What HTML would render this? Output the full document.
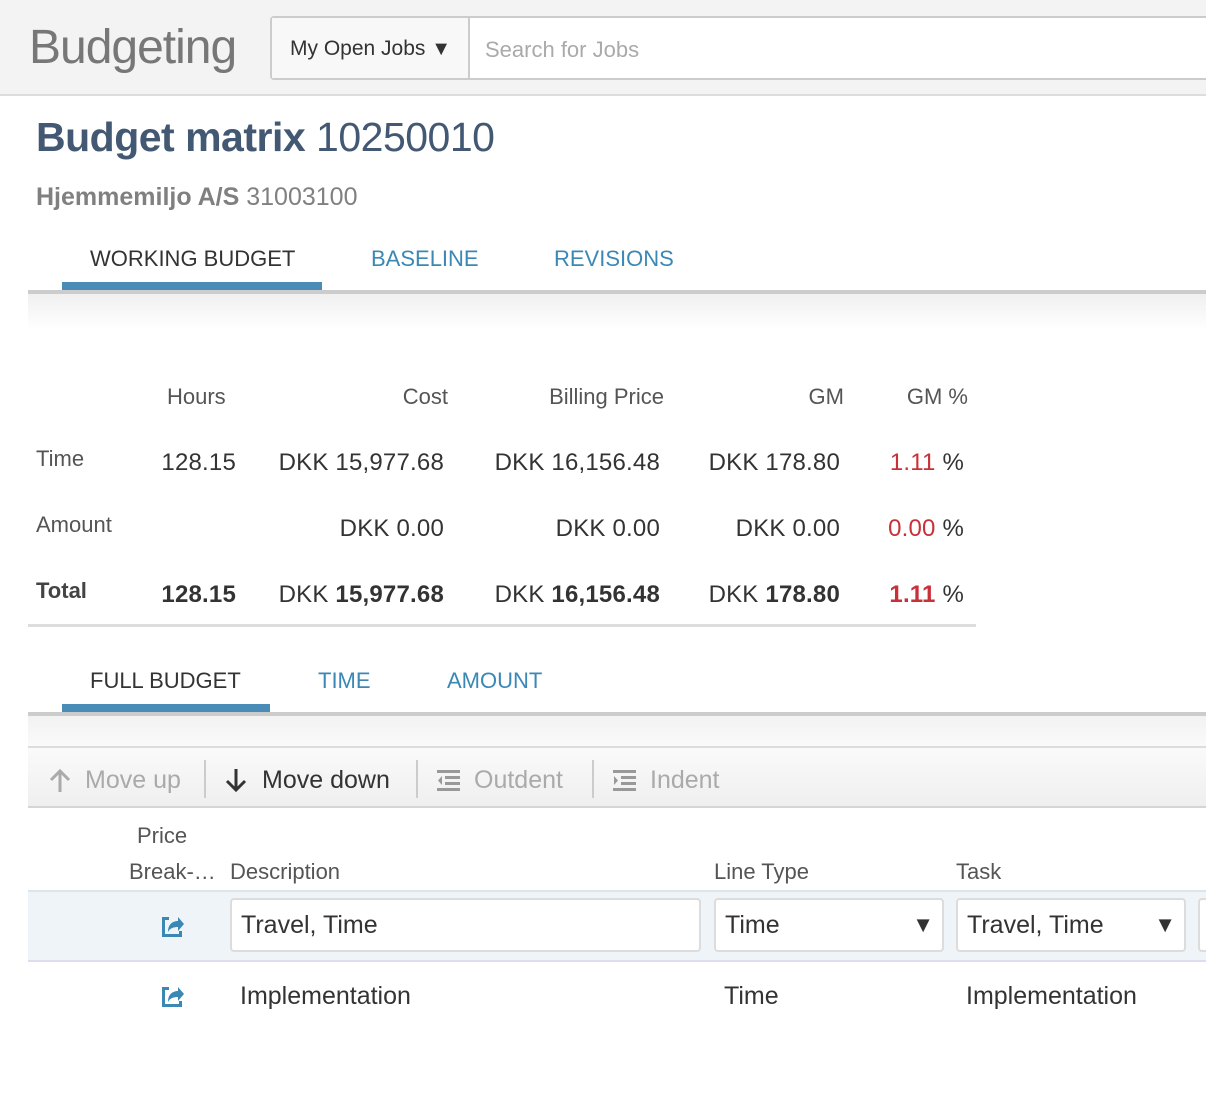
<!DOCTYPE html>
<html><head><style>
*{margin:0;padding:0;box-sizing:border-box}
body{width:1206px;height:1100px;background:#fff;font-family:"Liberation Sans",sans-serif;position:relative;overflow:hidden;color:#333}
.a{position:absolute;white-space:nowrap}
.r{text-align:right}
.hdr{position:absolute;left:0;top:0;width:1206px;height:96px;background:#f3f3f3;border-bottom:2px solid #ddd}
.tab{font-size:22px;color:#3b88b5}
.num{font-size:24px;color:#333;letter-spacing:0.2px}
.red{color:#c8303a}
.lbl{font-size:21px;color:#555}
.box{position:absolute;border:2px solid #dcdcdc;border-radius:4px;background:#fff;font-size:25px;padding-left:9px;line-height:50px;height:54px;top:898px}
.tri{position:absolute;right:8px;top:0;font-size:22px;color:#333}
</style></head><body>
<div class="hdr"></div>
<div class="a" style="left:29px;top:20px;font-size:48px;color:#777;letter-spacing:-1px">Budgeting</div>
<div class="a" style="left:270px;top:16px;width:960px;height:64px;border:2px solid #ccc;border-radius:4px;background:#fff"></div>
<div class="a" style="left:272px;top:18px;width:198px;height:60px;background:#f8f8f8;border-right:2px solid #ccc"></div>
<div class="a" style="left:290px;top:37px;font-size:21px;color:#333">My Open Jobs <span style="font-size:20px">▼</span></div>
<div class="a" style="left:485px;top:37px;font-size:22px;color:#aaa">Search for Jobs</div>

<div class="a" style="left:36px;top:114px;font-size:41px;font-weight:bold;color:#435873;letter-spacing:-0.5px">Budget matrix <span style="font-weight:normal">10250010</span></div>
<div class="a" style="left:36px;top:183px;font-size:25px;color:#808080"><b>Hjemmemiljo A/S</b> 31003100</div>

<div class="a tab" style="left:90px;top:246px;color:#333">WORKING BUDGET</div>
<div class="a tab" style="left:371px;top:246px">BASELINE</div>
<div class="a tab" style="left:554px;top:246px">REVISIONS</div>
<div class="a" style="left:62px;top:282px;width:260px;height:8px;background:#4a8cb8"></div>
<div class="a" style="left:28px;top:290px;width:1178px;height:4px;background:#ccc"></div>
<div class="a" style="left:28px;top:294px;width:1178px;height:36px;background:linear-gradient(#f0f0f0,#fff)"></div>

<div class="a lbl" style="left:167px;top:384px;font-size:22px">Hours</div>
<div class="a lbl r" style="left:340px;top:384px;width:108px;font-size:22px">Cost</div>
<div class="a lbl r" style="left:500px;top:384px;width:164px;font-size:22px">Billing Price</div>
<div class="a lbl r" style="left:760px;top:384px;width:84px;font-size:22px">GM</div>
<div class="a lbl r" style="left:880px;top:384px;width:88px;font-size:22px">GM %</div>

<div class="a lbl" style="left:36px;top:446px;font-size:22px">Time</div>
<div class="a num r" style="left:130px;top:449px;width:106px">128.15</div>
<div class="a num r" style="left:250px;top:449px;width:194px">DKK 15,977.68</div>
<div class="a num r" style="left:460px;top:449px;width:200px">DKK 16,156.48</div>
<div class="a num r" style="left:680px;top:449px;width:160px">DKK 178.80</div>
<div class="a num r" style="left:860px;top:449px;width:104px"><span class="red">1.11</span> %</div>

<div class="a lbl" style="left:36px;top:512px;font-size:22px">Amount</div>
<div class="a num r" style="left:260px;top:515px;width:184px">DKK 0.00</div>
<div class="a num r" style="left:470px;top:515px;width:190px">DKK 0.00</div>
<div class="a num r" style="left:680px;top:515px;width:160px">DKK 0.00</div>
<div class="a num r" style="left:860px;top:515px;width:104px"><span class="red">0.00</span> %</div>

<div class="a lbl" style="left:36px;top:578px;font-weight:bold;color:#444;font-size:22px">Total</div>
<div class="a num r" style="left:130px;top:581px;width:106px;font-weight:bold">128.15</div>
<div class="a num r" style="left:240px;top:581px;width:204px">DKK <b>15,977.68</b></div>
<div class="a num r" style="left:450px;top:581px;width:210px">DKK <b>16,156.48</b></div>
<div class="a num r" style="left:680px;top:581px;width:160px">DKK <b>178.80</b></div>
<div class="a num r" style="left:860px;top:581px;width:104px"><b class="red">1.11</b> %</div>
<div class="a" style="left:28px;top:624px;width:948px;height:3px;background:#ddd"></div>

<div class="a tab" style="left:90px;top:668px;color:#333">FULL BUDGET</div>
<div class="a tab" style="left:318px;top:668px">TIME</div>
<div class="a tab" style="left:447px;top:668px">AMOUNT</div>
<div class="a" style="left:62px;top:704px;width:208px;height:8px;background:#4a8cb8"></div>
<div class="a" style="left:28px;top:712px;width:1178px;height:4px;background:#ccc"></div>
<div class="a" style="left:28px;top:716px;width:1178px;height:30px;background:linear-gradient(#f2f2f2,#fafafa)"></div>
<div class="a" style="left:28px;top:746px;width:1178px;height:2px;background:#ddd"></div>
<div class="a" style="left:28px;top:748px;width:1178px;height:58px;background:linear-gradient(#fafafa,#efefef)"></div>
<div class="a" style="left:28px;top:806px;width:1178px;height:2px;background:#d5d5d5"></div>

<svg class="a" style="left:48px;top:768px" width="24" height="26"><path d="M12 24V3M3 12l9-9 9 9" stroke="#aaa" stroke-width="3" fill="none"/></svg>
<div class="a" style="left:85px;top:766px;font-size:25px;color:#aaa">Move up</div>
<div class="a" style="left:204px;top:760px;width:2px;height:38px;background:#ccc"></div>
<svg class="a" style="left:224px;top:767px" width="24" height="26"><path d="M12 2v21M3 14l9 9 9-9" stroke="#333" stroke-width="3" fill="none"/></svg>
<div class="a" style="left:262px;top:766px;font-size:25px;color:#333">Move down</div>
<div class="a" style="left:416px;top:760px;width:2px;height:38px;background:#ccc"></div>
<svg class="a" style="left:437px;top:769px" width="24" height="24"><g fill="#999"><rect x="0" y="1" width="23" height="3"/><rect x="8" y="7" width="15" height="3"/><rect x="8" y="13" width="15" height="3"/><rect x="0" y="19" width="23" height="3"/><path d="M5 7 L1 11.5 L5 16Z"/></g></svg>
<div class="a" style="left:474px;top:766px;font-size:25px;color:#aaa">Outdent</div>
<div class="a" style="left:592px;top:760px;width:2px;height:38px;background:#ccc"></div>
<svg class="a" style="left:613px;top:769px" width="24" height="24"><g fill="#999"><rect x="0" y="1" width="23" height="3"/><rect x="8" y="7" width="15" height="3"/><rect x="8" y="13" width="15" height="3"/><rect x="0" y="19" width="23" height="3"/><path d="M1 7 L5 11.5 L1 16Z"/></g></svg>
<div class="a" style="left:650px;top:766px;font-size:25px;color:#aaa">Indent</div>

<div class="a lbl" style="left:137px;top:823px;font-size:22px">Price</div>
<div class="a lbl" style="left:129px;top:859px;font-size:22px">Break-…</div>
<div class="a lbl" style="left:230px;top:859px;font-size:22px">Description</div>
<div class="a lbl" style="left:714px;top:859px;font-size:22px">Line Type</div>
<div class="a lbl" style="left:956px;top:859px;font-size:22px">Task</div>

<div class="a" style="left:28px;top:890px;width:1178px;height:2px;background:#dde5ea"></div>
<div class="a" style="left:28px;top:892px;width:1178px;height:68px;background:#eef4f8"></div>
<div class="a" style="left:28px;top:960px;width:1178px;height:2px;background:#dde"></div>
<svg class="a" style="left:159px;top:912px" width="28" height="28"><path d="M4 5h6v3H6v14h14v-3h3v6H3V5z" fill="#3b88b5"/><path d="M9 20c0-8 5-11 10-11V5l6 7-6 7v-4c-4 0-8 1-10 5z" fill="#3b88b5"/></svg>
<div class="box" style="left:230px;width:471px">Travel, Time</div>
<div class="box" style="left:714px;width:230px">Time<span class="tri">▼</span></div>
<div class="box" style="left:956px;width:230px">Travel, Time<span class="tri">▼</span></div>
<div class="box" style="left:1198px;width:40px"></div>

<svg class="a" style="left:159px;top:982px" width="28" height="28"><path d="M4 5h6v3H6v14h14v-3h3v6H3V5z" fill="#3b88b5"/><path d="M9 20c0-8 5-11 10-11V5l6 7-6 7v-4c-4 0-8 1-10 5z" fill="#3b88b5"/></svg>
<div class="a" style="left:240px;top:982px;font-size:25px;color:#333">Implementation</div>
<div class="a" style="left:724px;top:982px;font-size:25px;color:#333">Time</div>
<div class="a" style="left:966px;top:982px;font-size:25px;color:#333">Implementation</div>
</body></html>
